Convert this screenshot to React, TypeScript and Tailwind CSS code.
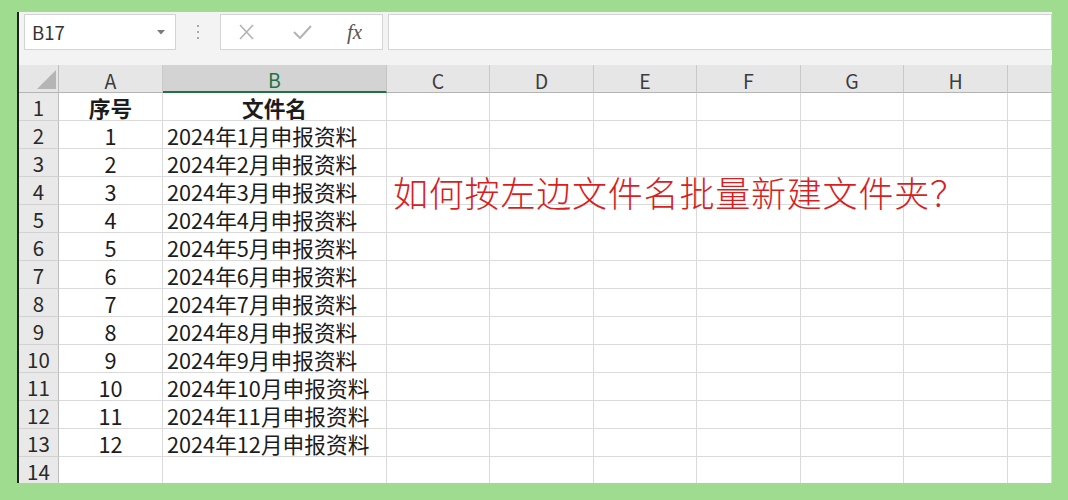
import React from "react";

const colLetters = ["A", "B", "C", "D", "E", "F", "G", "H", ""];

function HeaderCell({ label }: { label: string }) {
  if (label === "B") {
    return (
      <div className="bg-[#d3d3d3] border-r border-r-[#c4c4c4] border-b-2 border-b-[#217346] flex justify-center pt-[4px] text-[19.5px] leading-[22px] text-[#217346]">
        {label}
      </div>
    );
  }
  return (
    <div className="bg-[#e6e6e6] border-r border-r-[#c9c9c9] border-b border-b-[#b4b4b4] flex justify-center pt-[4px] text-[19.5px] leading-[23px] text-[#3c3c3c]">
      {label}
    </div>
  );
}

function Row({ n }: { n: number }) {
  let a = "";
  let b = "";
  if (n === 1) {
    a = "序号";
    b = "文件名";
  } else if (n >= 2 && n <= 13) {
    a = String(n - 1);
    b = `2024年${n - 1}月申报资料`;
  }
  const bold = n === 1 ? "font-bold" : "";
  return (
    <>
      <div className="bg-[#e9e9e9] border-r border-r-[#bdbdbd] border-b border-b-[#d2d2d2] flex justify-center pt-[2px] text-[20.5px] leading-[25px] text-[#2a2a2a]">
        {n}
      </div>
      <div className={`bg-white border-r border-b border-[#dadada] flex justify-center pt-[2px] text-[21.7px] leading-[25px] text-[#1c1c1c] whitespace-nowrap ${bold}`}>
        {a}
      </div>
      <div
        className={`bg-white border-r border-b border-[#dadada] flex pt-[2px] text-[21.7px] leading-[25px] text-[#1c1c1c] whitespace-nowrap ${bold} ${
          n === 1 ? "justify-center" : "pl-[4px]"
        }`}
      >
        {b}
      </div>
      {[0, 1, 2, 3, 4, 5, 6].map((i) => (
        <div key={i} className="bg-white border-r border-b border-[#dadada]" />
      ))}
    </>
  );
}

export default function App() {
  const rows = Array.from({ length: 14 }, (_, i) => i + 1);
  return (
    <div className="w-[1068px] h-[500px] bg-[#9fdc8f] pt-[12px] pl-[17px] pr-[16px] pb-[17px] font-['Noto_Sans_CJK_SC',sans-serif]">
      <div className="h-full border-l-2 border-l-[#1f1f1f] bg-[#f3f3f3] flex flex-col overflow-hidden">
        {/* formula bar */}
        <div className="h-[53px] shrink-0 flex items-start pt-[2px]">
          <div className="ml-[5px] w-[152px] h-[36px] bg-white border border-[#d4d4d4] flex items-center pl-[7px] pr-[10px]">
            <span className="text-[18.5px] leading-[34px] text-[#333]">B17</span>
            <svg className="ml-auto" width="8" height="5" viewBox="0 0 8 5">
              <polygon points="0,0 8,0 4,4.5" fill="#7a7a7a" />
            </svg>
          </div>
          <div className="w-[44px] h-[36px] flex flex-col items-center justify-center gap-[4px]">
            <div className="w-[2px] h-[2px] bg-[#a8a8a8]" />
            <div className="w-[2px] h-[2px] bg-[#a8a8a8]" />
            <div className="w-[2px] h-[2px] bg-[#a8a8a8]" />
          </div>
          <div className="w-[163px] h-[36px] bg-white border border-[#d4d4d4] flex items-center pl-[17px]">
            <svg width="17" height="16" viewBox="0 0 17 16">
              <path d="M2 1 L15 15 M15 1 L2 15" stroke="#b3b3b3" strokeWidth="1.6" fill="none" />
            </svg>
            <svg className="ml-[38px]" width="19" height="14" viewBox="0 0 19 14">
              <path d="M1 7 L7 13 L18 1" stroke="#b3b3b3" strokeWidth="2" fill="none" />
            </svg>
            <span className="ml-[35px] font-['Liberation_Serif',serif] italic text-[21px] leading-[34px] text-[#555]">
              fx
            </span>
          </div>
          <div className="ml-[5px] flex-1 h-[36px] bg-white border border-[#d4d4d4]" />
        </div>

        {/* grid */}
        <div className="relative grid grid-cols-[40px_104px_224px_103px_104px_103px_104px_103px_104px_1fr] auto-rows-[28px]">
          <div className="relative bg-[#e6e6e6] border-r border-r-[#bdbdbd] border-b border-b-[#b4b4b4]">
            <svg className="absolute right-[2px] bottom-[3px]" width="19" height="19" viewBox="0 0 19 19">
              <polygon points="19,0 19,19 0,19" fill="#b5b5b5" />
            </svg>
          </div>
          {colLetters.map((l, i) => (
            <HeaderCell key={i} label={l} />
          ))}
          {rows.map((n) => (
            <Row key={n} n={n} />
          ))}
          <div className="absolute left-[374px] top-[109px] whitespace-nowrap text-[35px] leading-[35px] tracking-[0.8px] font-light text-[#d81e1e]">
            如何按左边文件名批量新建文件夹？
          </div>
        </div>
      </div>
    </div>
  );
}
